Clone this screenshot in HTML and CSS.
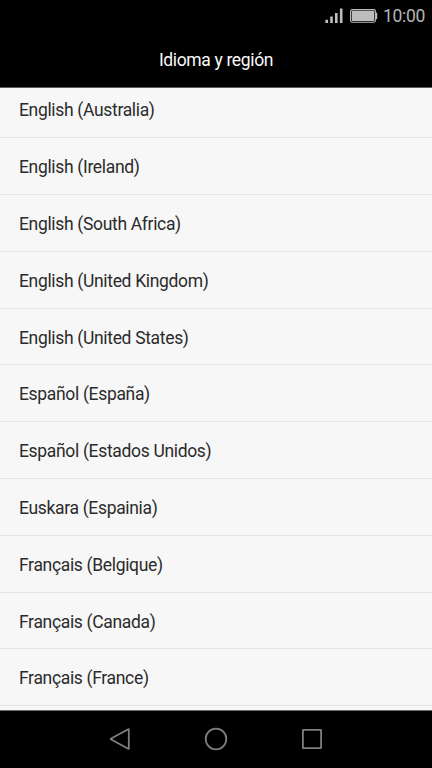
FILE: index.html
```html
<!DOCTYPE html>
<html lang="es">
<head>
    <meta charset="UTF-8">
    <meta name="viewport" content="width=device-width, initial-scale=1.0">
    <title>Idioma y región</title>
    <link rel="stylesheet" href="styles.css">
</head>
<body>
    <div class="screen">
        <div class="status-bar">
            <svg class="signal" width="18" height="16" viewBox="0 0 18 16">
                <path d="M0.4 11.7h2.6v3.3H0.4zM5.2 8.5h2.6V15H5.2zM10 5h2.6v10H10zM14.9 0.5h2.6V15h-2.6z"/>
            </svg>
            <svg class="battery" width="28" height="14" viewBox="0 0 28 14">
                <rect class="battery-case" x="0.6" y="0.6" width="24.8" height="12.6" rx="1.6"/>
                <rect x="1.8" y="1.8" width="22.4" height="10.2" rx="0.5"/>
                <path d="M25.6 3.6h0.8q0.8 0 0.8 0.8v5q0 0.8-0.8 0.8h-0.8z"/>
            </svg>
            <span class="clock">10:00</span>
        </div>

        <header class="header">
            <h1>Idioma y región</h1>
        </header>

        <main class="list">
            <ul>
                <li>English (Australia)</li>
                <li>English (Ireland)</li>
                <li>English (South Africa)</li>
                <li>English (United Kingdom)</li>
                <li>English (United States)</li>
                <li>Español (España)</li>
                <li>Español (Estados Unidos)</li>
                <li>Euskara (Espainia)</li>
                <li>Français (Belgique)</li>
                <li>Français (Canada)</li>
                <li>Français (France)</li>
            </ul>
        </main>

        <nav class="nav-bar">
            <svg width="24" height="24" viewBox="0 0 24 24">
                <path d="M20.8 2.4v19.2q0 0.6-0.6 0.2L3.2 12.6q-0.9-0.6 0-1.2L20.2 2.2q0.6-0.4 0.6 0.2z"/>
            </svg>
            <svg width="24" height="24" viewBox="0 0 24 24">
                <circle cx="12" cy="12" r="10.3"/>
            </svg>
            <svg width="24" height="24" viewBox="0 0 24 24">
                <rect x="2.9" y="2.9" width="18.2" height="18.2" rx="0.3"/>
            </svg>
        </nav>
    </div>
</body>
</html>
```
FILE: styles.css
```css
* {
    margin: 0;
    padding: 0;
    box-sizing: border-box;
}
body {
    background: #000;
    font-family: Roboto, sans-serif;
}
.screen {
    display: flex;
    flex-direction: column;
    height: 768px;
    overflow: hidden;
}
.status-bar {
    display: flex;
    justify-content: flex-end;
    align-items: center;
    height: 32px;
    padding-right: 7px;
    color: #b4b4b4;
}
.status-bar svg {
    fill: #bdbdbd;
}
.signal {
    margin-right: 7px;
}
.battery {
    margin-right: 5px;
}
.status-bar .battery-case {
    fill: none;
    stroke: #bdbdbd;
    stroke-width: 1.1;
}
.clock {
    font-size: 17.5px;
    line-height: 32px;
    letter-spacing: -0.3px;
}
.header {
    height: 56px;
    border-bottom: 1px solid #5c5a5b;
    text-align: center;
}
h1 {
    font-size: 17.5px;
    font-weight: 400;
    line-height: 56px;
    letter-spacing: -0.35px;
    color: #fafafa;
}
.list {
    height: 622px;
    background: #f7f7f7;
    overflow: hidden;
}
/* la lista aparece un poco desplazada */
ul {
    margin-top: -6.6px;
    list-style: none;
}
li {
    height: 56.8px;
    padding-left: 19px;
    border-bottom: 1px solid #e4e4e4;
    font-size: 17.5px;
    line-height: 58px;
    letter-spacing: -0.33px;
    color: #2b2b2b;
}
.nav-bar {
    display: flex;
    justify-content: center;
    gap: 72px;
    height: 58px;
    padding-top: 16px;
    border-top: 1px solid #6c6c6c;
}
.nav-bar svg {
    fill: none;
    stroke: #7f7f7f;
    stroke-width: 1.8;
}
```
